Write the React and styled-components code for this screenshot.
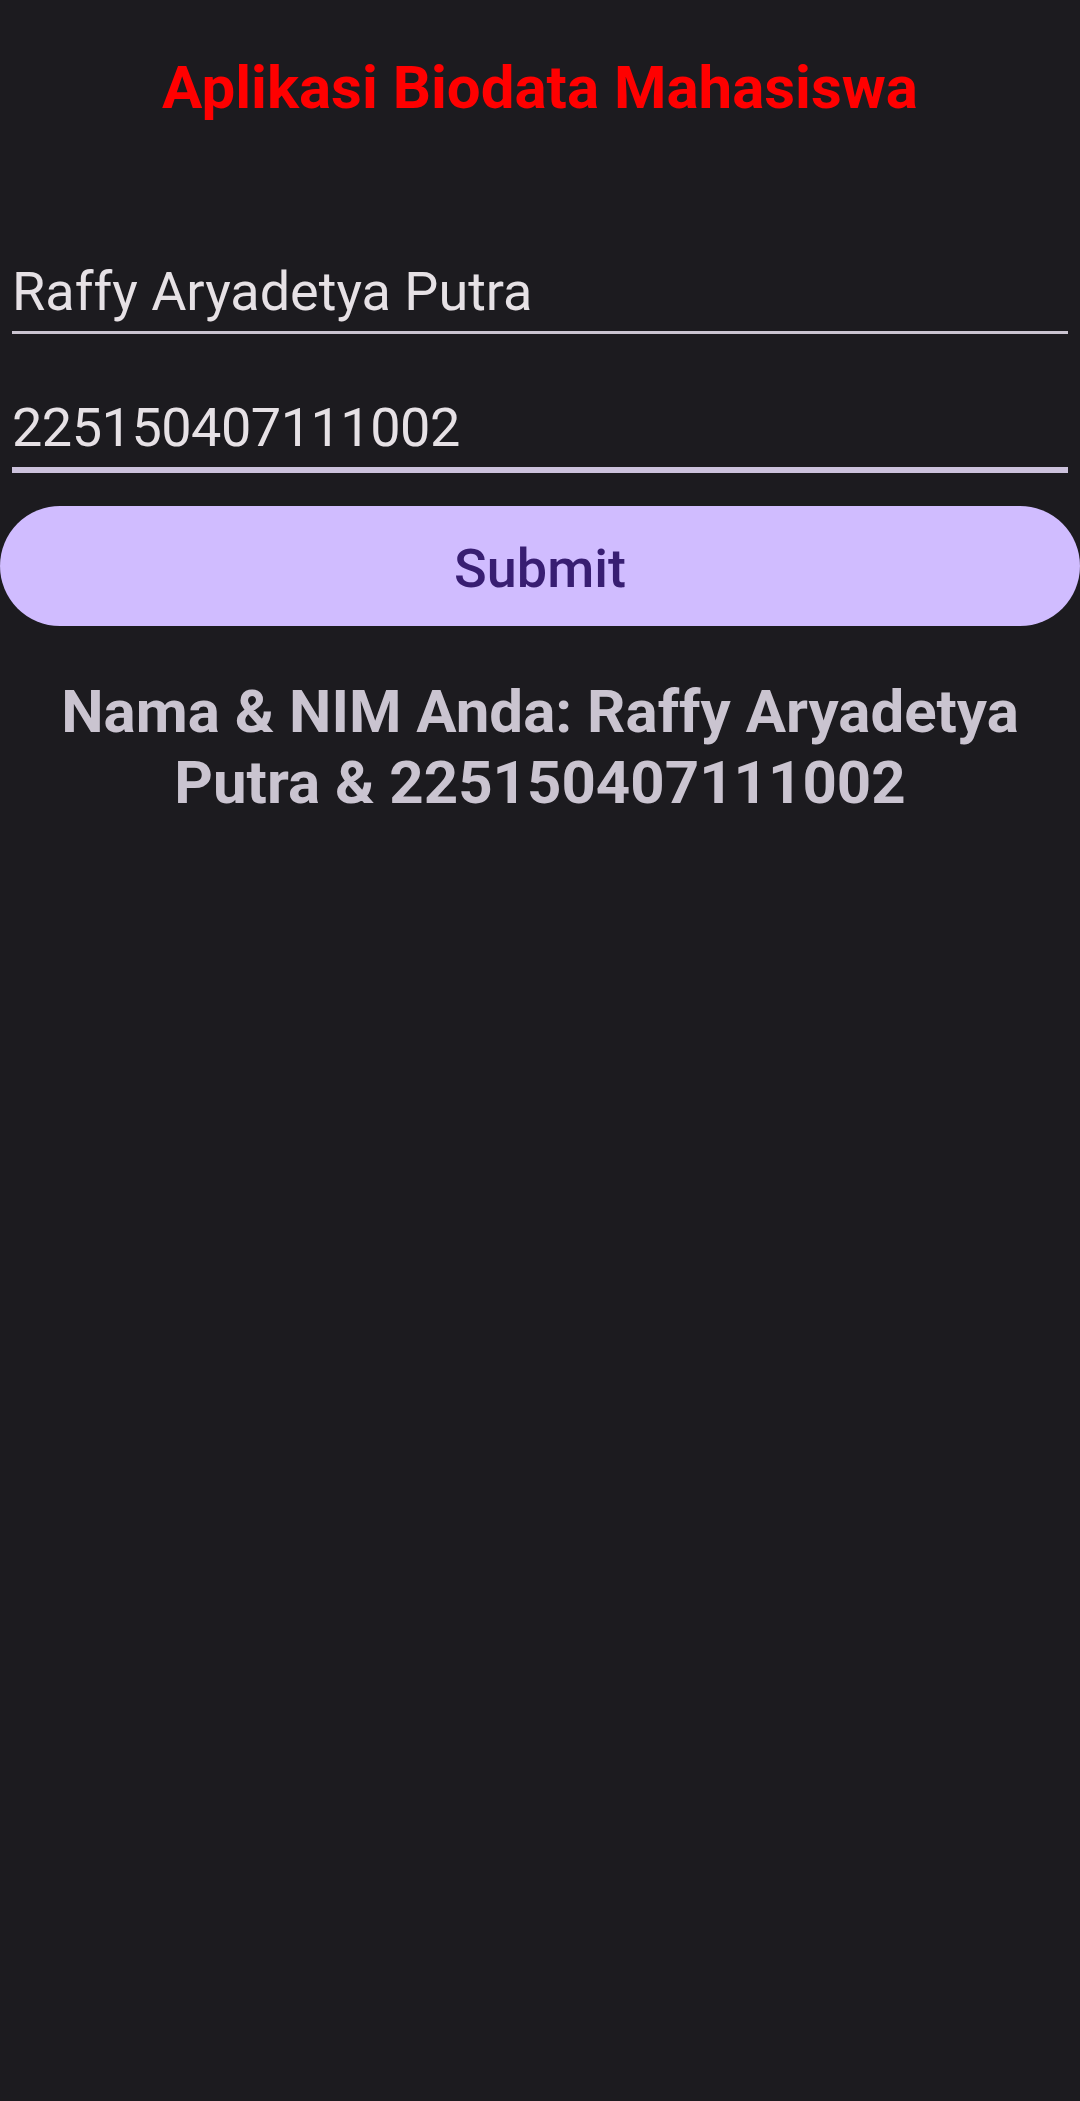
import React, { useState } from "react";
import styled, { createGlobalStyle } from "styled-components";

const GlobalStyle = createGlobalStyle`
  html, body {
    margin: 0;
    padding: 0;
    background: #1c1b1f;
  }
  body {
    font-family: Roboto, "Noto Sans", "Liberation Sans", sans-serif;
    min-height: 2101px;
  }
  * { box-sizing: border-box; }
`;

const Screen = styled.main`
  display: flex;
  flex-direction: column;
  align-items: stretch;
  min-height: 2101px;
  background: #1c1b1f;
  padding-top: 53px;
`;

const Title = styled.h1`
  margin: 0;
  text-align: center;
  color: #ff0000;
  font-family: Roboto, "Liberation Sans", sans-serif;
  font-weight: 700;
  font-size: 60px;
  line-height: 70px;
`;

const Field = styled.label`
  display: block;
  margin: ${(p) => p.$top}px 12px 0;
`;

const Input = styled.input`
  display: block;
  width: 100%;
  height: ${(p) => 79 + p.$line}px;
  padding: 0;
  margin: 0;
  border: none;
  border-bottom: ${(p) => p.$line}px solid ${(p) => p.$lineColor};
  border-radius: 0;
  background: transparent;
  color: #e6e1e5;
  font-family: Roboto, "Liberation Sans", sans-serif;
  font-size: 54px;
  line-height: 79px;
  letter-spacing: ${(p) => p.$tracking || 0}px;
  outline: none;
  caret-color: #d0bcff;
`;

const SubmitButton = styled.button`
  display: flex;
  align-items: center;
  justify-content: center;
  margin-top: 33px;
  width: 100%;
  height: 120px;
  padding: 5px 0 0;
  border: none;
  border-radius: 60px;
  background: #d0bcff;
  color: #381e72;
  font-family: Roboto, "Liberation Sans", sans-serif;
  font-weight: 500;
  font-size: 54px;
  line-height: 64px;
  cursor: pointer;
`;

const Result = styled.p`
  margin: 50px 40px 0;
  text-align: center;
  color: #cac4d0;
  font-family: Roboto, "Liberation Sans", sans-serif;
  font-weight: 700;
  font-size: 60px;
  line-height: 71px;
`;

export default function App() {
  const [nama, setNama] = useState("Raffy Aryadetya Putra");
  const [nim, setNim] = useState("225150407111002");
  const [shown, setShown] = useState({
    nama: "Raffy Aryadetya Putra",
    nim: "225150407111002",
  });

  return (
    <>
      <GlobalStyle />
      <Screen>
        <Title>Aplikasi Biodata Mahasiswa</Title>
        <Field $top={129}>
          <Input
            value={nama}
            onChange={(e) => setNama(e.target.value)}
            $line={3}
            $lineColor="#cac4d0"
          />
        </Field>
        <Field $top={54}>
          <Input
            value={nim}
            onChange={(e) => setNim(e.target.value)}
            $line={6}
            $lineColor="#ccc2dc"
            $tracking={-0.5}
          />
        </Field>
        <SubmitButton onClick={() => setShown({ nama, nim })}>Submit</SubmitButton>
        <Result>
          Nama &amp; NIM Anda: {shown.nama} &amp; {shown.nim}
        </Result>
      </Screen>
    </>
  );
}
